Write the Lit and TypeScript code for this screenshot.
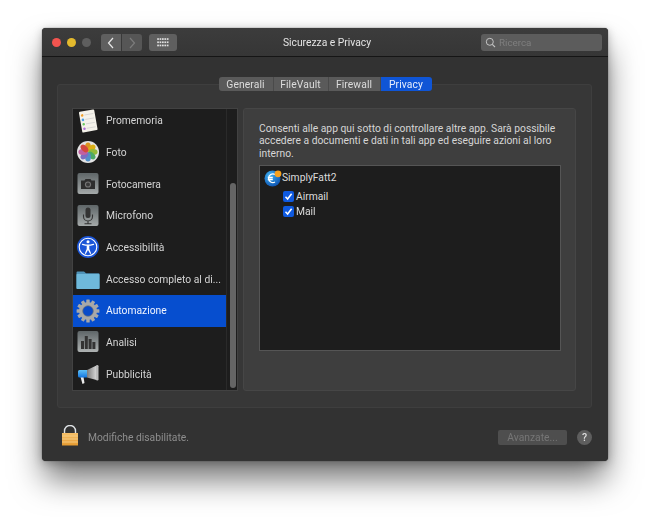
import { LitElement, html, css, svg } from "lit";
import { customElement } from "lit/decorators.js";

const icons: Record<string, unknown> = {
  reminders: svg`<svg viewBox="0 0 24 24" width="24" height="24">
    <g transform="rotate(-10 12 12)"><rect x="4.500" y="1.500" width="15.500" height="21" rx="1" fill="#f4f2ea"/>
    <g stroke="#c8c8c8" stroke-width=".6"><path d="M9.500 5.500h9M9.500 10h9M9.500 14.500h9M9.500 19h9"/></g>
    <circle cx="7.200" cy="5.500" r="1.300" fill="#f0a030"/><circle cx="7.200" cy="10" r="1.300" fill="#4aa0e8"/><circle cx="7.200" cy="14.500" r="1.300" fill="#6cc860"/><circle cx="7.200" cy="19" r="1.300" fill="#b070d8"/></g></svg>`,
  photos: svg`<svg viewBox="0 0 24 24" width="24" height="24">
    <circle cx="12" cy="12" r="11" fill="#e4e4e4"/>
    <g style="mix-blend-mode:multiply">
    <ellipse cx="12" cy="7" rx="2.900" ry="4.600" fill="#f6a623"/>
    <ellipse cx="12" cy="7" rx="2.900" ry="4.600" fill="#f5c518" transform="rotate(45 12 12)"/>
    <ellipse cx="12" cy="7" rx="2.900" ry="4.600" fill="#a5cf3e" transform="rotate(90 12 12)"/>
    <ellipse cx="12" cy="7" rx="2.900" ry="4.600" fill="#55bd72" transform="rotate(135 12 12)"/>
    <ellipse cx="12" cy="7" rx="2.900" ry="4.600" fill="#5aa0e0" transform="rotate(180 12 12)"/>
    <ellipse cx="12" cy="7" rx="2.900" ry="4.600" fill="#8b7ad8" transform="rotate(225 12 12)"/>
    <ellipse cx="12" cy="7" rx="2.900" ry="4.600" fill="#d86bb5" transform="rotate(270 12 12)"/>
    <ellipse cx="12" cy="7" rx="2.900" ry="4.600" fill="#ee4f45" transform="rotate(315 12 12)"/></g></svg>`,
  camera: svg`<svg viewBox="0 0 24 24" width="24" height="24">
    <defs><linearGradient id="g1" x1="0" y1="0" x2="0" y2="1"><stop offset="0" stop-color="#5f6668"/><stop offset="1" stop-color="#a4a9a9"/></linearGradient></defs>
    <rect x="1.500" y="1" width="21" height="21" rx="2" fill="url(#g1)"/>
    <path d="M5 8.500h3.500l1-1.500h5l1 1.500H19v8.500H5z" fill="#2e2e2e"/><circle cx="12" cy="12.500" r="3.100" fill="#777"/><circle cx="12" cy="12.500" r="2" fill="#3a3a3a"/></svg>`,
  mic: svg`<svg viewBox="0 0 24 24" width="24" height="24">
    <defs><linearGradient id="g2" x1="0" y1="0" x2="0" y2="1"><stop offset="0" stop-color="#5f6668"/><stop offset="1" stop-color="#a4a9a9"/></linearGradient></defs>
    <rect x="1.500" y="1" width="21" height="21" rx="2" fill="url(#g2)"/>
    <rect x="9.500" y="3.500" width="5" height="10.500" rx="2.500" fill="#333"/>
    <path d="M7.500 10.500v2a4.500 4.500 0 0 0 9 0v-2M12 17v2.500M8.500 19.800h7" fill="none" stroke="#333" stroke-width="1.100"/></svg>`,
  access: svg`<svg viewBox="0 0 24 24" width="24" height="24">
    <circle cx="12" cy="12" r="11" fill="#1b55d8"/><circle cx="12" cy="12" r="8.800" fill="none" stroke="#fff" stroke-width="1.100"/>
    <circle cx="12" cy="6.800" r="1.500" fill="#fff"/>
    <path d="M6.500 9.300C9 10 10.500 10.200 12 10.200S15 10 17.500 9.300" fill="none" stroke="#fff" stroke-width="1.300" stroke-linecap="round"/>
    <path d="M10.700 10.200h2.600V14l1.900 4.500-1 .4L12 15l-2.200 3.900-1-.4 1.900-4.500z" fill="#fff"/></svg>`,
  folder: svg`<svg viewBox="0 0 24 24" width="24" height="24">
    <path d="M.5 5.500a1 1 0 0 1 1-1h6.500l2 1.700h12.500a1 1 0 0 1 1 1V21.500H.5z" fill="#4f93b8"/>
    <rect x=".5" y="7" width="23" height="15" rx=".8" fill="#6fb9db"/></svg>`,
  gear: svg`<svg viewBox="0 0 24 24" width="24" height="24">
    <g fill="#a8a8a8">
    ${[0,30,60,90,120,150,180,210,240,270,300,330].map(a=>svg`<rect x="10.300" y=".6" width="3.400" height="5" rx=".5" transform="rotate(${a} 12 12)"/>`)}
    <circle cx="12" cy="12" r="9"/></g>
    <circle cx="12" cy="12" r="5.300" fill="#0a4bc9"/><circle cx="12" cy="12" r="5.300" fill="none" stroke="#6f7478" stroke-width=".7"/></svg>`,
  analytics: svg`<svg viewBox="0 0 24 24" width="24" height="24">
    <defs><linearGradient id="g3" x1="0" y1="0" x2="0" y2="1"><stop offset="0" stop-color="#5f6668"/><stop offset="1" stop-color="#aeb2b2"/></linearGradient></defs>
    <rect x="1.500" y="1" width="21" height="21" rx="2" fill="url(#g3)"/>
    <g fill="#333"><rect x="5" y="11" width="3" height="8"/><rect x="8.800" y="6" width="3" height="13"/><rect x="12.600" y="9" width="3" height="10"/><rect x="16.400" y="12" width="3" height="7"/></g></svg>`,
  ads: svg`<svg viewBox="0 0 24 24" width="24" height="24">
    <defs><linearGradient id="g4" x1="0" y1="0" x2="1" y2="0"><stop offset="0" stop-color="#7c7c7c"/><stop offset="1" stop-color="#d8d8d8"/></linearGradient>
    <linearGradient id="g5" x1="0" y1="0" x2="0" y2="1"><stop offset="0" stop-color="#5fc0f5"/><stop offset="1" stop-color="#1476e0"/></linearGradient></defs>
    <path d="M4.500 15 7.500 15 8.500 21 6.500 22z" fill="#ececec"/>
    <path d="M2 9.500a1.500 1.500 0 0 1 1.500-1.500H11v7.500H3.500A1.500 1.500 0 0 1 2 14z" fill="url(#g5)"/>
    <path d="M11 8 20.500 3.500V18L11 15.500z" fill="url(#g4)"/>
    <rect x="20" y="3" width="2.500" height="15.500" rx="1.200" fill="#bdbdbd"/></svg>`,
};

const rows: [string, string][] = [
  ["reminders", "Promemoria"], ["photos", "Foto"], ["camera", "Fotocamera"], ["mic", "Microfono"],
  ["access", "Accessibilità"], ["folder", "Accesso completo al di..."], ["gear", "Automazione"],
  ["analytics", "Analisi"], ["ads", "Pubblicità"],
];

const check = svg`<svg viewBox="0 0 11 11" width="11" height="11"><path d="M2.500 5.800 4.600 8 8.600 2.800" fill="none" stroke="#fff" stroke-width="1.500"/></svg>`;

@customElement("app-root")
export class AppRoot extends LitElement {
  static styles = css`
    :host { display: block; height: 517px; padding: 28px 42px 56px; box-sizing: border-box; background: #fff; overflow: hidden;
      font-family: Roboto, "Liberation Sans", sans-serif; font-size: 10.300px; color: #d4d4d4; }
    * { box-sizing: border-box; }
    .window { width: 566px; height: 433px; border-radius: 4px; background: #323232; display: flex; flex-direction: column;
      box-shadow: 0 0 1px #222, 0 20px 32px -2px rgba(0,0,0,.55), 0 2px 10px rgba(0,0,0,.25); }
    .title { height: 29px; flex: none; display: grid; grid-template-columns: 1fr auto 1fr; align-items: center; padding: 1px 6px 0 10px;
      background: linear-gradient(#3c3c3c, #363636); border-bottom: 1px solid #151515; border-radius: 4px 4px 0 0; }
    .left { display: flex; align-items: center; }
    .dots { display: flex; gap: 6px; margin-right: 10px; }
    .dot { width: 9px; height: 9px; border-radius: 50%; }
    .nav { display: flex; gap: 1px; margin-right: 7px; }
    .btn { height: 17px; background: #5f5f5f; display: flex; align-items: center; justify-content: center; border-radius: 3px; }
    .nav .btn { width: 20px; }
    .nav .btn:first-child { border-radius: 3px 0 0 3px; }
    .nav .btn:last-child { border-radius: 0 3px 3px 0; background: #565656; }
    .grid { width: 28px; }
    .heading { color: #e4e4e4; }
    .search { justify-self: end; width: 121px; height: 17px; border-radius: 3px; background: #5c5c5c; display: flex; align-items: center;
      gap: 3px; padding-left: 4px; color: #7f7f7f; font-size: 9.800px; }
    .main { flex: 1; display: flex; flex-direction: column; padding: 20px 16px 0 15px; min-height: 0; }
    .tabs { display: flex; justify-content: center; height: 14px; position: relative; z-index: 1; margin-left: 1px; letter-spacing: .1px; }
    .tab { display: flex; align-items: center; justify-content: center; background: #5a5a5a; color: #dcdcdc; border-right: 1px solid #4a4a4a; }
    .tab.sel { background: #0f55d6; color: #e8eefc; border-right: 0; border-radius: 0 3px 3px 0; }
    .tab:first-child { border-radius: 3px 0 0 3px; }
    .t1 { width: 55px; } .t2 { width: 55px; } .t3 { width: 52px; } .t4 { width: 51px; }
    .panel { margin-top: -7px; height: 324px; flex: none; background: #373737; border: 1px solid #3e3e3e; border-radius: 3px;
      display: flex; gap: 5px; padding: 23px 15px 16px 14px; }
    .list { width: 166px; flex: none; height: 283px; background: #1d1d1d; border: 1px solid #424242; display: flex; overflow: hidden; }
    .items { width: 153px; flex: none; margin-top: -4.200px; }
    .row { height: 31.700px; display: flex; align-items: center; gap: 6px; padding-left: 3px; white-space: nowrap; }
    .row svg { flex: none; }
    .row.sel { background: #064ecf; color: #f0f4ff; }
    .track { flex: 1; display: flex; flex-direction: column; justify-content: flex-end; align-items: center; padding: 0 0 2px 1px; border-left: 1px solid #2a2a2a; }
    .thumb { width: 6px; height: 205px; border-radius: 3px; background: #656565; }
    .pane { flex: 1; min-width: 0; height: 283px; background: #3e3e3e; border: 1px solid #464646; border-radius: 3px; padding: 14px 0 0 15px; }
    .pane p { margin: 0 0 5px; line-height: 12.300px; color: #d6d6d6; width: 305px; }
    .box { width: 302px; height: 186px; background: #1d1d1d; border: 1px solid #555; padding: 3px 0 0 4px; color: #dcdcdc; }
    .app { display: flex; align-items: center; height: 18px; margin-bottom: 1.500px; }
    .chk { display: flex; align-items: center; gap: 2px; height: 15.500px; padding-left: 19px; }
    .cb { width: 11px; height: 11px; background: #0f5ae0; border-radius: 2px; display: flex; align-items: center; justify-content: center; }
    .cb svg { flex: none; }
    .bottom { flex: 1; display: flex; align-items: center; padding: 6px 0 0 5px; color: #8e8e8e; }
    .lock { margin: 0 10px 5px 0; }
    .spacer { flex: 1; }
    .adv { width: 69px; height: 15px; border-radius: 2px; background: #4e4e4e; color: #767676; display: flex; align-items: center; justify-content: center; margin-right: 10px; }
    .help { width: 15px; height: 15px; border-radius: 50%; background: #5e5e5e; color: #dedede; font-size: 10.500px; font-weight: 500; display: flex; align-items: center; justify-content: center; }
  `;

  render() {
    return html`<div class="window">
      <div class="title">
        <div class="left">
          <div class="dots">
            <div class="dot" style="background:#f2544f"></div>
            <div class="dot" style="background:#e3b92d"></div>
            <div class="dot" style="background:#5e5e5e"></div>
          </div>
          <div class="nav">
            <div class="btn"><svg width="8" height="12" viewBox="0 0 8 12"><path d="M6 1 1.500 6 6 11" fill="none" stroke="#e8e8e8" stroke-width="1.200"/></svg></div>
            <div class="btn"><svg width="8" height="12" viewBox="0 0 8 12"><path d="M2 1 6.500 6 2 11" fill="none" stroke="#7c7c7c" stroke-width="1.200"/></svg></div>
          </div>
          <div class="btn grid"><svg width="12" height="9" viewBox="0 0 12 9" fill="#e0e0e0">
            ${[0.2,2.6,5,7.4,9.8].map(x=>[0.2,3.4,6.6].map(y=>svg`<rect x="${x}" y="${y}" width="1.700" height="1.700"/>`))}
          </svg></div>
        </div>
        <div class="heading">Sicurezza e Privacy</div>
        <div class="search">
          <svg width="11" height="11" viewBox="0 0 11 11"><circle cx="4.800" cy="4.800" r="3.500" fill="none" stroke="#c4c4c4" stroke-width="1"/><path d="M7.300 7.300 10 10" stroke="#c4c4c4" stroke-width="1.100"/></svg>
          <span>Ricerca</span>
        </div>
      </div>
      <div class="main">
        <div class="tabs">
          <div class="tab t1">Generali</div><div class="tab t2">FileVault</div><div class="tab t3">Firewall</div><div class="tab t4 sel">Privacy</div>
        </div>
        <div class="panel">
          <div class="list">
            <div class="items">
              ${rows.map(([i, t]) => html`<div class="row ${i === "gear" ? "sel" : ""}">${icons[i]}<span>${t}</span></div>`)}
            </div>
            <div class="track"><div class="thumb"></div></div>
          </div>
          <div class="pane">
            <p>Consenti alle app qui sotto di controllare altre app. Sarà possibile accedere a documenti e dati in tali app ed eseguire azioni al loro interno.</p>
            <div class="box">
              <div class="app">
                <svg width="18" height="18" viewBox="0 0 18 18">
                  <defs><radialGradient id="sph" cx=".35" cy=".3" r=".8"><stop offset="0" stop-color="#3fb0f0"/><stop offset="1" stop-color="#0a4fb0"/></radialGradient></defs>
                  <circle cx="8.500" cy="9.500" r="8" fill="url(#sph)"/>
                  <path d="M11 5.500A4.300 4.300 0 1 0 11 13M3.800 8.500h5M3.800 10.500h5" fill="none" stroke="#fff" stroke-width="1.300"/>
                  <circle cx="14" cy="4.800" r="3.400" fill="#f6a11f"/>
                </svg>
                <span>SimplyFatt2</span>
              </div>
              <div class="chk"><div class="cb">${check}</div><span>Airmail</span></div>
              <div class="chk"><div class="cb">${check}</div><span>Mail</span></div>
            </div>
          </div>
        </div>
        <div class="bottom">
          <svg class="lock" width="16" height="21" viewBox="0 0 16 21">
            <defs><linearGradient id="lk" x1="0" y1="0" x2="0" y2="1"><stop offset="0" stop-color="#f6c069"/><stop offset="1" stop-color="#e59a30"/></linearGradient></defs>
            <path d="M2.500 9.500V6a5.500 5.500 0 0 1 11 0v3.500" fill="none" stroke="#dfe3e6" stroke-width="1.400"/>
            <rect x="0" y="8" width="16" height="12.500" fill="url(#lk)"/>
            <path d="M0 11h16M0 14h16M0 17h16" stroke="#f8d99c" stroke-width=".7"/>
          </svg>
          <span>Modifiche disabilitate.</span>
          <div class="spacer"></div>
          <div class="adv">Avanzate...</div>
          <div class="help">?</div>
        </div>
      </div>
    </div>`;
  }
}
